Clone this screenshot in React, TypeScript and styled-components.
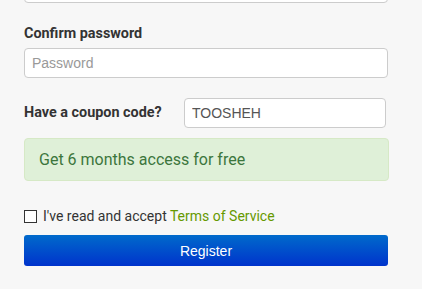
import React, { useState } from "react";
import styled, { createGlobalStyle } from "styled-components";

const GlobalStyle = createGlobalStyle`
    html, body {
        margin: 0;
        padding: 0;
        background: #f7f7f7;
        font-family: Roboto, "Liberation Sans", Arial, sans-serif;
        color: #333;
    }
    * { box-sizing: border-box; }
`;

const Form = styled.form`
    width: 364px;
    margin: -27px 0 0 24px;
    display: flex;
    flex-direction: column;
`;
const Input = styled.input<{ $width?: number }>`
    width: ${p => (p.$width ? `${p.$width}px` : "100%")};
    height: 30px;
    padding: 0 8px 0 7px;
    border: 1px solid #ccc;
    border-radius: 4px;
    background: #fff;
    font-family: "Liberation Sans", Arial, sans-serif;
    font-size: 14px;
    color: #555;
    outline: none;
    &::placeholder { color: #999; }
`;
const Label = styled.label`
    display: block;
    margin: 21px 0 4px;
    font-size: 14.4px;
    line-height: 20px;
    font-weight: 700;
    color: #333;
`;
const CouponRow = styled.div`
    margin-top: 20px;
    display: flex;
    align-items: center;
    justify-content: space-between;
    padding-right: 2px;
    & > ${Label} { margin: 0; }
`;
const Alert = styled.div`
    margin-top: 10px;
    width: 365px;
    height: 43px;
    padding: 0 14px;
    display: flex;
    align-items: center;
    background: #dff0d8;
    border: 1px solid #d6e9c6;
    border-radius: 4px;
    color: #3c763d;
    font-size: 16px;
`;
const CheckRow = styled.label`
    margin-top: 25px;
    height: 20px;
    display: flex;
    align-items: center;
    gap: 6px;
    font-size: 14px;
    color: #333;
`;
const Box = styled.span<{ $on: boolean }>`
    width: 13px;
    height: 13px;
    border: 1px solid #333;
    background: ${p => (p.$on ? "#333" : "#fff")};
    flex: none;
`;
const Terms = styled.a`
    color: #669900;
    text-decoration: none;
`;
const RegisterButton = styled.button`
    margin-top: 9px;
    height: 31px;
    border: none;
    border-radius: 3px;
    background: linear-gradient(to bottom, #006acb, #0033cc);
    color: #fff;
    font-family: "Liberation Sans", Arial, sans-serif;
    font-size: 14px;
    cursor: pointer;
`;

export default function App() {
    const [agree, setAgree] = useState(false);
    const [coupon, setCoupon] = useState("TOOSHEH");
    return (
        <>
            <GlobalStyle />
            <Form onSubmit={e => e.preventDefault()}>
                <Input type="password" placeholder="Password" />
                <Label>Confirm password</Label>
                <Input type="password" placeholder="Password" />
                <CouponRow>
                    <Label>Have a coupon code?</Label>
                    <Input $width={202} value={coupon} onChange={e => setCoupon(e.target.value)} />
                </CouponRow>
                <Alert>Get 6 months access for free</Alert>
                <CheckRow onClick={() => setAgree(a => !a)}>
                    <Box $on={agree} />
                    <span>I've read and accept <Terms href="#">Terms of Service</Terms></span>
                </CheckRow>
                <RegisterButton type="submit">Register</RegisterButton>
            </Form>
        </>
    );
}
